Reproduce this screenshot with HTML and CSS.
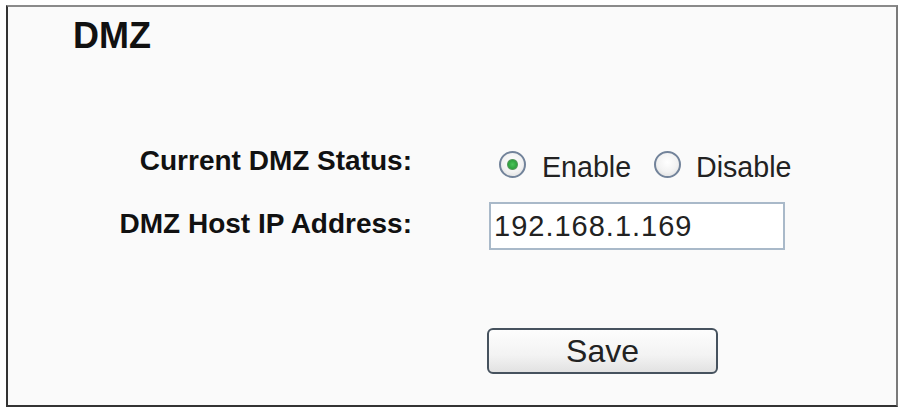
FILE: index.html
```html
<!DOCTYPE html>
<html lang="en">
<head>
<meta charset="utf-8">
<title>DMZ</title>
<link rel="stylesheet" href="styles.css">
</head>
<body>
<div class="frame">
  <h1 class="title">DMZ</h1>
  <form class="form">
    <div class="row row-status">
      <label class="label">Current DMZ Status:</label>
      <div class="control radios">
        <input class="radio first" type="radio" name="dmz" id="en" checked>
        <label class="opt" for="en">Enable</label>
        <input class="radio second" type="radio" name="dmz" id="dis">
        <label class="opt" for="dis">Disable</label>
      </div>
    </div>
    <div class="row row-ip">
      <label class="label label-ip" for="ip">DMZ Host IP Address:</label>
      <div class="control">
        <input class="ip" id="ip" type="text" value="192.168.1.169">
      </div>
    </div>
    <div class="row row-save">
      <div class="label"></div>
      <div class="control">
        <button class="save" type="button">Save</button>
      </div>
    </div>
  </form>
</div>
</body>
</html>
```
FILE: styles.css
```css
html, body {
  margin: 0;
  padding: 0;
  background: #ffffff;
}

body {
  font-family: "Liberation Sans", Arial, sans-serif;
  color: #111;
}

.frame {
  margin: 5px 2px 0 6px;
  height: 402px;
  box-sizing: border-box;
  border: 2px solid;
  border-color: #8a8a8a #7a7a7a #333 #333;
  background: #fafafa;
  padding-top: 10px;
}

.title {
  margin: 0;
  padding-left: 65px;
  font-size: 36px;
  line-height: 37px;
  font-weight: bold;
  color: #111;
}

.form {
  display: flex;
  flex-direction: column;
  margin-top: 87px;
}

.row {
  display: grid;
  grid-template-columns: 404px 1fr;
  column-gap: 77px;
  align-items: center;
}

.row-status {
  height: 40px;
}

.row-ip {
  margin-top: 21px;
  height: 48px;
}

.row-save {
  margin-top: 78px;
  height: 46px;
}

.label {
  text-align: right;
  font-size: 28px;
  font-weight: bold;
  line-height: 40px;
  color: #111;
  padding-bottom: 7px;
}

.label-ip {
  padding-bottom: 5px;
}

.control {
  display: flex;
  align-items: center;
}

.radios {
  height: 40px;
}

.radio {
  -webkit-appearance: none;
  appearance: none;
  box-sizing: border-box;
  width: 27px;
  height: 27px;
  margin: 0;
  border-radius: 50%;
  border: 2px solid #72839a;
  background: radial-gradient(circle at 50% 40%, #ffffff 0%, #f2f2f2 55%, #d8d8d8 100%);
  flex: none;
}

.radio:checked {
  background:
    radial-gradient(circle at 50% 50%, #4cc35a 0, #2fa43f 4px, #5a9a60 5px, rgba(255,255,255,0) 6px),
    radial-gradient(circle at 50% 40%, #ffffff 0%, #f2f2f2 55%, #d8d8d8 100%);
}

.radio.first {
  margin-left: 10px;
}

.radio.second {
  margin-left: 23px;
}

.opt {
  font-size: 28.6px;
  line-height: 40px;
  color: #222;
  margin-left: 16px;
  padding-top: 4px;
}

.radio.second + .opt {
  margin-left: 15px;
}

.ip {
  box-sizing: border-box;
  width: 296px;
  height: 48px;
  margin: 0;
  padding: 0 0 0 3px;
  border: 2px solid #a9b9c9;
  background: #fff;
  font-family: "Liberation Sans", Arial, sans-serif;
  font-size: 29px;
  letter-spacing: 1px;
  color: #222;
  outline: none;
}

.save {
  box-sizing: border-box;
  margin-left: -2px;
  width: 231px;
  height: 46px;
  border: 2px solid #46525e;
  border-radius: 6px;
  background: linear-gradient(#fdfdfd, #f3f3f3 60%, #e2e2e2);
  font-family: "Liberation Sans", Arial, sans-serif;
  font-size: 32px;
  color: #222;
  padding: 0;
  line-height: 42px;
}
```
